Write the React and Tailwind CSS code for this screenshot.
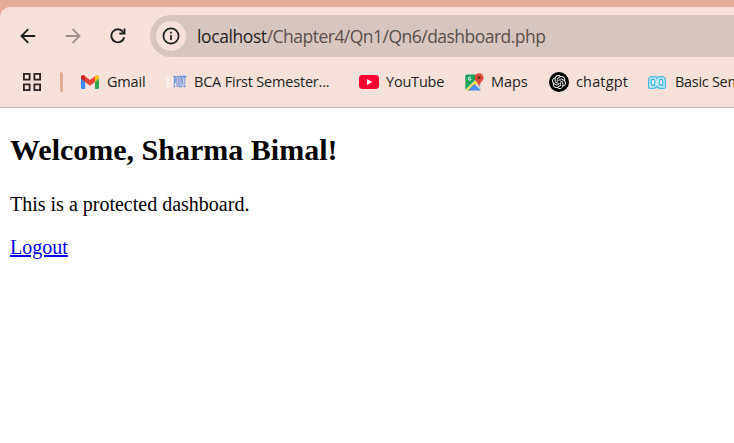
import React from "react";
import { SiOpenai } from "react-icons/si";

const ui = "font-['Open_Sans','Noto_Sans',sans-serif]";

function BackArrow({ className }) {
  return (
    <svg className={className} width="16" height="16" viewBox="0 0 16 16" fill="none" stroke="currentColor" strokeWidth="1.9">
      <path d="M15.2 8H1.8M8.3 1.2L1.5 8l6.8 6.8" />
    </svg>
  );
}

function Reload() {
  return (
    <svg width="16" height="16" viewBox="0 0 16 16" fill="none" stroke="#1f1f1f" strokeWidth="1.9">
      <path d="M14.2 9.2A6.5 6.5 0 1 1 12.9 3.7" />
      <path d="M15.4 .4V6.4H9.4V4.6H12.2L13.6 3.2V.4Z" fill="#1f1f1f" stroke="none" />
    </svg>
  );
}

function Gmail() {
  return (
    <svg width="18" height="14" viewBox="0 0 18 14">
      <path d="M0 3V12.8Q0 14 1.2 14H4.1V6.5Z" fill="#4285f4" />
      <path d="M13.9 6.5V14h2.9q1.2 0 1.2-1.2V3Z" fill="#34a853" />
      <path d="M13.9 1.2V6.9L18 3.6V2.2C18 .1 15.7-.6 14.3.7Z" fill="#fbbc04" />
      <path d="M4.1 6.9V1.2L9 5l4.9-3.8v5.7L9 10.7Z" fill="#ea4335" />
      <path d="M0 2.2V3.6L4.1 6.9V1.2L3.7.7C2.3-.6 0 .1 0 2.2Z" fill="#c5221f" />
    </svg>
  );
}

function BcaPoint() {
  return (
    <svg width="20" height="20" viewBox="0 0 20 20" fontFamily="Liberation Serif, serif" fontWeight="bold" fontSize="17">
      <g transform="translate(0 15.3) scale(.205 1)"><text fill="#fbf8f7">BCA</text></g>
      <g transform="translate(7.6 15.3) scale(.225 1)"><text fill="#3f80d8" stroke="#3f80d8" strokeWidth=".4">POINT</text></g>
      <path d="M1 18.5H19" stroke="#eddfda" />
    </svg>
  );
}

function YouTube() {
  return (
    <svg width="20" height="14" viewBox="0 0 20 14">
      <rect width="20" height="14" rx="3.4" fill="#ff0033" />
      <path d="M8 4l5.2 3L8 10Z" fill="#fff" />
    </svg>
  );
}

function Maps() {
  return (
    <svg width="19" height="19" viewBox="0 0 19 19">
      <rect x=".3" y="1.6" width="15.7" height="16" rx="1.6" fill="#d5dce0" />
      <path d="M.3 15.8V3.2Q.3 1.6 1.9 1.6H11L12 6 .7 17.1Z" fill="#1fa05c" />
      <path d="M.6 17.2L10.3 7.6l2.5 2.4-7.4 7.6H1.8Z" fill="#ffda3b" />
      <path d="M2.8 17.6L9.2 11l6.6 6.3q-.3.3-1.3.3Z" fill="#4b8df5" />
      <path d="M.5 17L10.8 6.8" stroke="#fff" strokeWidth=".7" />
      <path d="M6 4.8A1.5 1.5 0 1 0 6.2 6.2H4.8" fill="none" stroke="#fff" strokeWidth=".9" />
      <path d="M14.1.2A4.5 4.5 0 0 0 9.6 4.7C9.6 8 13.2 8.8 13.8 13.3h.6C15 8.8 18.6 8 18.6 4.7A4.5 4.5 0 0 0 14.1.2Z" fill="#de4b3e" />
      <circle cx="14.1" cy="4.6" r="1.6" fill="#7d2d28" />
    </svg>
  );
}

function ChatGpt() {
  return (
    <span className="flex size-5 items-center justify-center rounded-full bg-black text-white">
      <SiOpenai size={14} />
    </span>
  );
}

function Twins() {
  return (
    <svg width="18" height="13" viewBox="0 0 18 13" stroke="#45b9e2">
      <path d="M4.6.6H6Q8.5.6 9 2.3Q9.5.6 12 .6h1.4Q17.4.6 17.4 4.6V11Q17.4 12.4 16 12.4H12.6Q9.7 12.4 9 10.3Q8.3 12.4 5.4 12.4H2Q.6 12.4.6 11V4.6Q.6.6 4.6.6Z" fill="#c8ebf6" strokeWidth="1.2" />
      <rect x="3.3" y="3.2" width="3.3" height="6" rx="1.5" fill="#fff" strokeWidth="1.4" />
      <rect x="11.4" y="3.2" width="3.3" height="6" rx="1.5" fill="#fff" strokeWidth="1.4" />
      <path d="M5.5 8.6l1.7 1.6M13.6 8.6l1.7 1.6" strokeWidth="1.2" />
    </svg>
  );
}

function Bookmark({ icon, label, className, textClass }) {
  return (
    <div className={`flex shrink-0 items-center ${className}`}>
      {icon}
      <span className={`whitespace-nowrap ${textClass}`}>{label}</span>
    </div>
  );
}

export default function App() {
  return (
    <div className="h-[443px] w-[734px] overflow-hidden bg-white">
      <header className={`h-[108px] bg-[#e4ab99] pt-[7px] ${ui}`}>
        <div className="h-[101px] rounded-tl-[10px] border-b border-[#c9b9b3] bg-[#f5e1da] pt-2">
          <div className="flex h-[42px] items-center pl-5">
            <BackArrow className="text-[#1f1f1f]" />
            <BackArrow className="ml-[29px] rotate-180 text-[#9b8f8b]" />
            <span className="ml-[29px]"><Reload /></span>
            <div className="ml-6 flex h-[42px] flex-1 items-center rounded-l-full bg-[#d7c6bf] pl-1.5">
              <span className="flex size-[30px] items-center justify-center rounded-full bg-[#f5e1da]">
                <svg width="18" height="18" viewBox="0 0 18 18" fill="none" stroke="#1f1f1f" strokeWidth="1.7">
                  <circle cx="9" cy="9" r="7.6" />
                  <path d="M9 8v5M9 4.8v1.8" />
                </svg>
              </span>
              <span className="ml-[11px] whitespace-nowrap text-[17.5px] leading-6 tracking-[-0.52px] text-[#5a504d]">
                <span className="tracking-[-0.4px] text-[#1f1f1f]">localhost</span>/Chapter4/Qn1/Qn6/dashboard.php
              </span>
            </div>
          </div>
          <nav className="flex h-[50px] items-center overflow-hidden pl-[23px] text-[14.5px] leading-5 text-[#1f1f1f]">
            <svg className="shrink-0" width="18" height="18" viewBox="0 0 18 18" fill="none" stroke="#29211f" strokeWidth="1.8">
              <path d="M.9.9h5.7v5.7H.9ZM11.4.9h5.7v5.7h-5.7ZM.9 11.4h5.7v5.7H.9ZM11.4 11.4h5.7v5.7h-5.7Z" />
            </svg>
            <span className="ml-[19px] h-5 w-[3px] shrink-0 rounded-full bg-[#e4ab99]" />
            <Bookmark icon={<Gmail />} label="Gmail" className="ml-[18px] w-[85px]" textClass="ml-2 tracking-[-0.2px]" />
            <Bookmark icon={<BcaPoint />} label="BCA First Semester..." className="w-[193px]" textClass="ml-2 tracking-[-0.2px]" />
            <Bookmark icon={<YouTube />} label="YouTube" className="w-[106px]" textClass="ml-[7px] tracking-[-0.2px]" />
            <Bookmark icon={<Maps />} label="Maps" className="w-[84px]" textClass="ml-[7px] tracking-[-0.1px]" />
            <Bookmark icon={<ChatGpt />} label="chatgpt" className="w-[99px]" textClass="ml-[7px] tracking-[0.15px]" />
            <Bookmark icon={<Twins />} label="Basic Semester" className="" textClass="ml-[9px] tracking-[-0.3px]" />
          </nav>
        </div>
      </header>
      <main className="px-2.5 pt-[25px] font-['Liberation_Serif','Times_New_Roman',serif] text-[20px] leading-[23px] text-black">
        <h2 className="text-[30px] leading-[34px] font-bold">Welcome, Sharma Bimal!</h2>
        <p className="mt-[26px]">This is a protected dashboard.</p>
        <a href="#logout" className="mt-5 inline-block text-[#0000ee] underline">Logout</a>
      </main>
    </div>
  );
}
